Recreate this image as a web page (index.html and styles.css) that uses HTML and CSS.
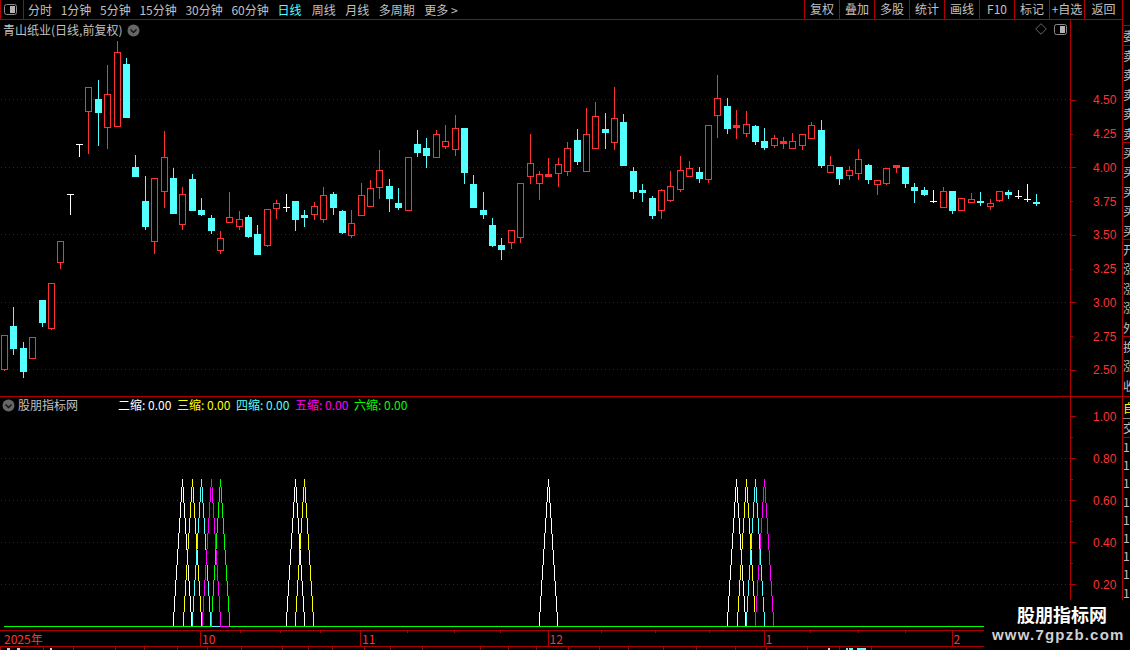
FILE: index.html
```html
<!DOCTYPE html>
<html lang="zh-CN">
<head>
<meta charset="utf-8">
<title>青山纸业</title>
<link rel="stylesheet" href="styles.css">
</head>
<body>
<div class="app">
  <div class="main">
    <header class="toolbar">
      <div class="layout-cell">
        <svg class="panel-icon" width="13" height="11" viewBox="0 0 13 11"><rect x="0.5" y="0.5" width="12" height="10" rx="2" fill="none" stroke="#8a8a8a"/><rect x="6" y="2" width="5" height="7" fill="#b4b4b4"/></svg>
      </div>
      <nav class="tabs">
        <span>分时</span><span>1分钟</span><span>5分钟</span><span>15分钟</span><span>30分钟</span><span>60分钟</span><span class="active">日线</span><span>周线</span><span>月线</span><span>多周期</span><span>更多 &gt;</span>
      </nav>
      <div class="actions">
        <span>复权</span><span>叠加</span><span>多股</span><span>统计</span><span>画线</span><span>F10</span><span>标记</span><span>+自选</span><span class="last">返回</span>
      </div>
    </header>

    <section class="pane pane-main">
      <div class="plot">
        <svg id="candles" class="chart" viewBox="0 20 1070 376" width="1070" height="376"></svg>
        <div class="pane-head">
          <span class="stock">青山纸业(日线,前复权)</span>
          <svg class="chev" width="13" height="13" viewBox="0 0 13 13"><circle cx="6.5" cy="6.5" r="6" fill="#666"/><path d="M3.5 5.5 6.5 8.5 9.5 5.5" fill="none" stroke="#111" stroke-width="1.4"/></svg>
        </div>
        <div class="pane-tools">
          <svg width="12" height="12" viewBox="0 0 12 12"><path d="M6 .7 11.3 6 6 11.3 .7 6Z" fill="none" stroke="#666"/></svg>
          <svg width="13" height="11" viewBox="0 0 13 11"><rect x="0.5" y="0.5" width="12" height="10" rx="2" fill="none" stroke="#8a8a8a"/><rect x="6" y="2" width="5" height="7" fill="#b4b4b4"/></svg>
        </div>
      </div>
      <div class="axis axis-main">
        <div class="ax-row"><i class="tick"></i><span>4.50</span></div>
        <div class="ax-row minor"><i class="tick"></i><span>4.25</span></div>
        <div class="ax-row"><i class="tick"></i><span>4.00</span></div>
        <div class="ax-row minor"><i class="tick"></i><span>3.75</span></div>
        <div class="ax-row"><i class="tick"></i><span>3.50</span></div>
        <div class="ax-row minor"><i class="tick"></i><span>3.25</span></div>
        <div class="ax-row"><i class="tick"></i><span>3.00</span></div>
        <div class="ax-row minor"><i class="tick"></i><span>2.75</span></div>
        <div class="ax-row"><i class="tick"></i><span>2.50</span></div>
      </div>
    </section>

    <section class="pane pane-sub">
      <div class="plot">
        <svg id="signals" class="chart" viewBox="0 397 1070 233" width="1070" height="233"></svg>
        <div class="pane-head sub-head">
          <svg class="chev" width="13" height="13" viewBox="0 0 13 13"><circle cx="6.5" cy="6.5" r="6" fill="#666"/><path d="M3.5 5.5 6.5 8.5 9.5 5.5" fill="none" stroke="#111" stroke-width="1.4"/></svg>
          <span class="ind-name">股朋指标网</span>
          <div class="legend">
            <span class="white">二缩: 0.00</span>
            <span class="yellow">三缩: 0.00</span>
            <span class="cyan">四缩: 0.00</span>
            <span class="magenta">五缩: 0.00</span>
            <span class="green">六缩: 0.00</span>
          </div>
        </div>
      </div>
      <div class="axis axis-sub">
        <div class="ax-row"><i class="tick"></i><span>1.00</span></div>
        <div class="ax-row minor"><i class="tick"></i></div>
        <div class="ax-row"><i class="tick"></i><span>0.80</span></div>
        <div class="ax-row minor"><i class="tick"></i></div>
        <div class="ax-row"><i class="tick"></i><span>0.60</span></div>
        <div class="ax-row minor"><i class="tick"></i></div>
        <div class="ax-row"><i class="tick"></i><span>0.40</span></div>
        <div class="ax-row minor"><i class="tick"></i></div>
        <div class="ax-row"><i class="tick"></i><span>0.20</span></div>
      </div>
    </section>

    <div class="dates">
      <svg id="date-ticks" class="overlay" width="1122" height="3"></svg>
      <span class="first">2025年</span><span>10</span><span>11</span><span>12</span><span>1</span><span>2</span>
    </div>
    <svg id="tab-ticks" class="tabstrip" width="1122" height="3"></svg>
  </div>

  <aside class="side">
    <div class="side-top"></div>
    <div class="side-cell">委</div>
    <div class="side-block"><span>卖</span><span>卖</span><span>卖</span><span>卖</span><span>卖</span></div>
    <div class="side-block"><span>买</span><span>买</span><span>买</span><span>买</span><span>买</span></div>
    <div class="side-block"><span>开</span><span>涨</span><span>涨</span><span>涨</span><span>外</span></div>
    <div class="side-block short"><span>换</span><span>涨</span><span>收</span></div>
    <div class="side-gold">自</div>
    <div class="side-box">交</div>
    <div class="side-nums"><span>1</span><span>1</span><span>1</span><span>1</span><span>1</span><span>1</span><span>1</span><span>1</span><span>1</span></div>
  </aside>

  <div class="watermark">
    <div class="wm-title">股朋指标网</div>
    <div class="wm-url">www.7gpzb.com</div>
  </div>
</div>
<script src="chart.js"></script>
</body>
</html>
```
FILE: styles.css
```css
* { box-sizing: border-box; }
html, body { margin: 0; padding: 0; background: #000; }
body { width: 1130px; height: 650px; overflow: hidden; }

.app {
  position: relative;
  display: flex;
  width: 1130px;
  height: 650px;
  background: #000;
  color: #c0c0c0;
  font: 12px/16px "Noto Sans CJK SC", "Liberation Sans", sans-serif;
  overflow: hidden;
}
.main { display: flex; flex-direction: column; width: 1122px; flex: none; }

.toolbar {
  display: flex;
  align-items: stretch;
  height: 20px;
  flex: none;
  border-bottom: 1px solid #b00000;
}
.layout-cell {
  display: flex;
  align-items: center;
  justify-content: flex-end;
  width: 24px;
  padding-right: 6px;
  border-left: 1px solid #b00000;
  border-right: 1px solid #b00000;
}
.panel-icon { display: block; margin-top: -1px; }
.tabs { display: flex; align-items: center; gap: 8.7px; padding-left: 4px; white-space: nowrap; }
.tabs .active { color: #54ffff; }
.tabs .active ~ span { margin-left: 0.8px; }
.tabs .active + span { margin-left: 1.6px; }
.actions { display: flex; margin-left: auto; }
.actions span {
  width: 35px;
  border-left: 1px solid #b00000;
  text-align: center;
  line-height: 18px;
  white-space: nowrap;
}
.actions .last { width: 38px; }

.pane { display: flex; flex: none; }
.pane-main { height: 377px; border-bottom: 1px solid #b00000; }
.pane-sub { height: 233px; }
.plot { position: relative; width: 1070px; flex: none; }
.chart { display: block; shape-rendering: crispEdges; }

.pane-head {
  position: absolute;
  left: 3px;
  top: 1px;
  display: flex;
  align-items: center;
  height: 18px;
  gap: 5px;
  white-space: nowrap;
}
.chev { display: block; flex: none; }
.pane-tools {
  position: absolute;
  right: 3px;
  top: 3px;
  display: flex;
  align-items: center;
  gap: 7px;
}
.pane-tools svg { display: block; }

.sub-head { left: 2px; top: -1px; gap: 3px; }
.ind-name { width: 97px; }
.legend { display: flex; gap: 5px; }
.legend span { width: 54px; }
.white { color: #fff; }
.yellow { color: #ffff00; }
.cyan { color: #54ffff; }
.magenta { color: #ff00ff; }
.green { color: #00ff00; }

.axis {
  flex: 1;
  border-left: 1px solid #b00000;
  color: #ff3232;
  font-family: "Liberation Sans", sans-serif;
}
.axis-main { padding-top: 63.4px; }
.axis-main .ax-row { height: 33.75px; }
.axis-sub { padding-top: 9px; }
.axis-sub .ax-row { height: 21px; }
.ax-row { display: flex; align-items: center; }
.tick { display: block; width: 22px; flex: none; }
.tick::before { content: ""; display: block; width: 5px; height: 1px; background: #b00000; }
.minor .tick::before { width: 2px; }

.dates {
  position: relative;
  display: grid;
  grid-template-columns: 200px 160px 187.5px 216px 188px 1fr;
  height: 17px;
  flex: none;
  border-top: 1px solid #b00000;
  border-bottom: 1px solid #b00000;
  color: #ff3232;
  line-height: 15px;
}
.dates span { border-left: 1px solid #b00000; padding-left: 1px; }
.dates .first { padding-left: 4px; border-left: 0; }
.overlay { position: absolute; left: 0; top: 0; display: block; shape-rendering: crispEdges; }
.tabstrip { display: block; flex: none; shape-rendering: crispEdges; }

.side {
  display: flex;
  flex-direction: column;
  width: 8px;
  flex: none;
  border-left: 1px solid #b00000;
  overflow: hidden;
  white-space: nowrap;
  line-height: 19.4px;
}
.side-top { height: 25px; flex: none; }
.side-cell {
  height: 21px;
  flex: none;
  border-top: 1px solid #b00000;
  border-bottom: 1px solid #b00000;
  line-height: 19px;
  width: 14px;
}
.side-block {
  display: flex;
  flex-direction: column;
  height: 97px;
  flex: none;
  border-bottom: 1px solid #b00000;
  width: 14px;
}
.side-block.short { height: 60px; }
.side-gold { height: 21px; flex: none; color: #ffff00; width: 14px; line-height: 21px; }
.side-box {
  height: 20px;
  flex: none;
  width: 14px;
  border-top: 1px solid #888;
  border-bottom: 1px solid #b00000;
  line-height: 18px;
}
.side-nums { display: flex; flex-direction: column; padding-top: 0; }
.side-nums span { height: 18.2px; line-height: 18.2px; }

.watermark {
  position: absolute;
  left: 984px;
  top: 600px;
  width: 146px;
  height: 50px;
  background: #000;
  text-align: center;
}
.wm-title {
  margin-top: 4px;
  padding-left: 33px;
  text-align: left;
  color: #fff;
  font-size: 18px;
  font-weight: 700;
  line-height: 21px;
}
.wm-url {
  margin-top: 1px;
  padding-left: 8px;
  text-align: left;
  color: #d0d0d0;
  font: 700 15px/18px "Liberation Sans", sans-serif;
  letter-spacing: 1.2px;
}
```
FILE: chart.js
```js
var NS = "http://www.w3.org/2000/svg";
var RED = "#ff3232", CYAN = "#54ffff", WHITE = "#ffffff", LINE = "#b00000", DOT = "#8a0000";

function add(svg, name, attrs) {
  var el = document.createElementNS(NS, name);
  for (var k in attrs) el.setAttribute(k, attrs[k]);
  svg.appendChild(el);
  return el;
}
function box(svg, x, y, w, h, fill) {
  if (h > 0 && w > 0) add(svg, "rect", { x: x, y: y, width: w, height: h, fill: fill });
}
function dots(svg, y, x2) {
  for (var x = 1; x < x2; x += 4) box(svg, x, y, 1, 1, DOT);
}

/* x, high, body top, body bottom, low, kind: r hollow red, c solid cyan, w white doji */
var candles = [
  [4,335,335,369,370,"r"],[13,307,326,348,354,"c"],[23,342,348,371,377,"c"],[32,337,337,358,358,"r"],
  [42,300,300,322,326,"c"],[51,283,283,328,329,"r"],[60,241,241,262,268,"r"],[70,194,194,194,214,"w"],
  [79,144,144,144,156,"w"],[88,87,87,111,153,"r"],[98,80,99,112,145,"c"],[107,65,94,127,148,"r"],
  [117,41,52,126,126,"r"],[126,58,64,117,117,"c"],[135,155,167,176,176,"c"],[145,176,201,226,229,"c"],
  [154,178,178,241,253,"r"],[164,131,157,191,207,"r"],[173,168,178,213,213,"c"],[182,187,194,224,229,"r"],
  [192,174,179,210,210,"c"],[201,198,210,214,215,"c"],[211,215,218,230,233,"c"],[220,231,238,250,253,"r"],
  [229,192,217,222,222,"r"],[239,211,219,226,229,"r"],[248,215,217,236,237,"c"],[257,225,234,254,254,"c"],
  [267,209,209,245,246,"r"],[276,200,203,208,218,"r"],[286,194,207,207,211,"w"],[295,201,201,219,230,"c"],
  [304,210,215,217,226,"c"],[314,202,206,214,219,"r"],[323,187,195,219,222,"r"],[333,192,194,207,214,"c"],
  [342,210,211,232,233,"c"],[351,210,223,235,237,"r"],[361,183,195,215,215,"r"],[370,180,188,206,206,"r"],
  [379,150,170,187,198,"r"],[389,179,186,198,211,"c"],[398,188,203,207,209,"c"],[408,157,157,210,210,"r"],
  [417,130,144,152,156,"c"],[426,138,148,155,167,"c"],[436,130,134,157,157,"r"],[445,125,141,146,148,"r"],
  [455,115,128,149,155,"r"],[464,128,128,172,183,"c"],[473,175,184,207,207,"c"],[483,192,210,214,218,"c"],
  [492,218,225,245,246,"c"],[501,238,245,249,259,"c"],[511,230,230,242,248,"r"],[520,183,183,237,242,"r"],
  [530,134,163,176,183,"r"],[539,171,174,183,199,"r"],[548,158,174,176,176,"r"],[558,158,164,173,186,"r"],
  [567,142,148,171,175,"r"],[577,129,140,161,164,"c"],[586,108,134,171,171,"r"],[595,102,116,148,148,"r"],
  [605,113,129,132,148,"c"],[614,87,118,142,149,"r"],[623,114,122,165,165,"c"],[633,167,171,191,198,"c"],
  [642,184,190,192,201,"c"],[652,196,198,215,218,"c"],[661,189,190,210,218,"r"],[670,171,186,200,201,"r"],
  [680,156,170,189,191,"r"],[689,161,168,176,176,"r"],[699,167,172,178,182,"c"],[708,125,125,179,182,"r"],
  [717,75,98,115,137,"r"],[727,98,106,128,133,"c"],[736,110,125,127,138,"r"],[746,111,124,133,136,"r"],
  [755,125,126,141,144,"c"],[764,128,141,147,149,"c"],[774,135,138,145,147,"r"],[783,137,141,143,148,"r"],
  [792,133,141,148,148,"r"],[802,134,134,145,149,"r"],[811,122,125,138,138,"r"],[821,120,130,165,167,"c"],
  [830,156,165,172,172,"r"],[839,167,167,178,184,"c"],[849,166,170,175,179,"r"],[858,149,159,173,179,"r"],
  [868,164,165,179,183,"c"],[877,180,180,184,194,"r"],[886,168,168,183,184,"r"],[896,165,165,167,172,"r"],
  [905,167,167,183,187,"c"],[914,183,187,190,202,"c"],[924,187,190,194,195,"c"],[933,190,201,201,202,"w"],
  [943,187,191,207,207,"r"],[952,191,191,210,213,"c"],[961,198,198,210,210,"r"],[971,193,199,202,202,"r"],
  [980,192,201,202,205,"c"],[990,199,203,206,209,"r"],[999,191,191,200,201,"r"],[1008,190,192,194,198,"c"],
  [1018,190,196,196,198,"w"],[1027,184,199,199,201,"w"],[1036,194,202,203,205,"c"]
];

var main = document.getElementById("candles");
[99, 167, 234, 302, 369].forEach(function (y) { dots(main, y, 1070); });

candles.forEach(function (c) {
  var x = c[0], hi = c[1], top = c[2], bot = c[3], lo = c[4], kind = c[5];
  if (kind === "w") {
    box(main, x, hi, 1, lo - hi + 1, WHITE);
    box(main, x - 3, top, 7, 1, WHITE);
    return;
  }
  var col = kind === "r" ? RED : CYAN;
  box(main, x, hi, 1, top - hi, col);
  box(main, x, bot, 1, lo - bot + 1, col);
  if (kind === "c" || bot - top < 3) {
    box(main, x - 3, top, 7, bot - top + 1, col);
  } else {
    add(main, "rect", { x: x - 2.5, y: top + 0.5, width: 6, height: bot - top, fill: "#000", stroke: col });
  }
});

var sub = document.getElementById("signals");
[458, 500, 542, 584].forEach(function (y) { dots(sub, y, 1070); });

var peaks = [
  ["#ffffff", [182.5, 295.5, 548.5, 736.5]],
  ["#ffff00", [192.5, 304.5, 746.5]],
  ["#54ffff", [201.5, 755.5]],
  ["#ff00ff", [211.5, 764.5]],
  ["#00ff00", [220.5]]
];
peaks.forEach(function (p) {
  p[1].forEach(function (x) {
    add(sub, "polyline", {
      points: (x - 9.4) + ",626 " + x + ",479 " + (x + 9.4) + ",626",
      fill: "none", stroke: p[0], "stroke-width": 1
    });
  });
});
box(sub, 4, 626, 980, 1, "#00ff00");
box(sub, 212, 626, 8, 1, "#54ffff");
box(sub, 220, 626, 9, 1, "#ff00ff");

var dateTicks = document.getElementById("date-ticks");
[240, 280, 320, 407, 454, 500, 601, 655, 709, 810, 858, 905].forEach(function (x) {
  box(dateTicks, x, 0, 1, 2, LINE);
});
var tabTicks = document.getElementById("tab-ticks");
[0, 43, 73, 115, 144, 177, 207, 241, 282, 308, 332, 364, 390, 422, 480, 508, 536, 568, 599, 628, 663, 696, 735, 766, 807, 839, 871].forEach(function (x) {
  box(tabTicks, x, 0, 1, 3, LINE);
});
box(tabTicks, 7, 1, 3, 2, "#d0d0d0");
box(tabTicks, 17, 1, 3, 2, "#d0d0d0");
box(tabTicks, 50, 1, 2, 2, "#d0d0d0");
box(tabTicks, 828, 1, 2, 2, "#d0d0d0");
box(tabTicks, 846, 1, 2, 2, CYAN);
box(tabTicks, 849, 1, 4, 2, CYAN);
box(tabTicks, 857, 1, 9, 2, CYAN);
```
